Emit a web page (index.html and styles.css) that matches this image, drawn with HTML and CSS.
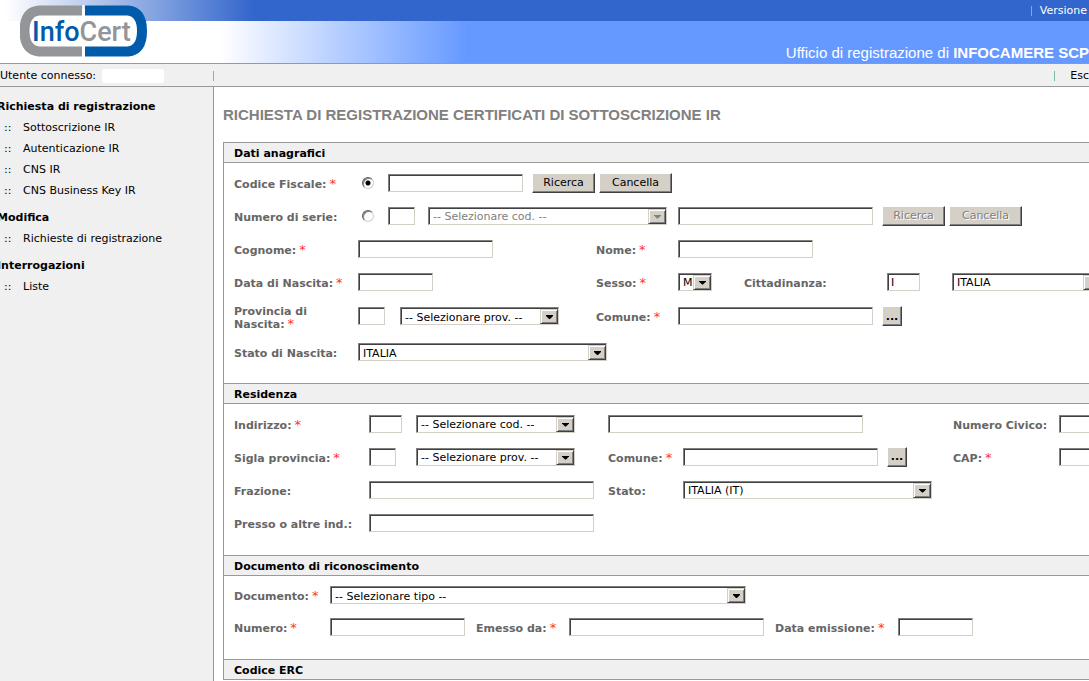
FILE: index.html
```html
<!DOCTYPE html>
<html lang="it">
<head>
<meta charset="utf-8">
<title>InfoCert - Ufficio di registrazione</title>
<link rel="stylesheet" href="styles.css">
</head>
<body>
<header class="header">
  <svg class="logo" width="128" height="52" viewBox="0 0 128 52" role="img" aria-label="InfoCert">
    <rect x="4" y="4" width="119" height="44" rx="18" fill="#fff"/>
    <path d="M62 5.500H19Q4.500 7 4.500 26T19 46.500H62" fill="none" stroke="#939598" stroke-width="10"/>
    <path d="M65 5.500H108Q122 7 122 26T108 46.500H65" fill="none" stroke="#005cab" stroke-width="10"/>
    <path d="M63.500 0V52" stroke="#fff" stroke-width="2"/>
    <text class="logo-text" x="12" y="36" fill="#005cab">Info<tspan fill="#939598">Cert</tspan></text>
  </svg>
  <div class="topbar"><span class="sep"></span><span>Versione</span></div>
  <div class="banner"><p class="office">Ufficio di registrazione di <b>INFOCAMERE SCP</b></p></div>
</header>
<div class="userbar">
  <div class="user">Utente connesso: <span class="username"></span></div>
  <span class="sep"></span>
  <div class="exit"><span class="sep"></span><a href="#">Esc</a></div>
</div>
<div class="body">
  <nav class="side">
    <section><h2>Richiesta di registrazione</h2>
      <ul><li><a href="#">Sottoscrizione IR</a></li><li><a href="#">Autenticazione IR</a></li><li><a href="#">CNS IR</a></li><li><a href="#">CNS Business Key IR</a></li></ul></section>
    <section><h2>Modifica</h2>
      <ul><li><a href="#">Richieste di registrazione</a></li></ul></section>
    <section><h2>Interrogazioni</h2>
      <ul><li><a href="#">Liste</a></li></ul></section>
  </nav>
  <main class="main">
    <h1>RICHIESTA DI REGISTRAZIONE CERTIFICATI DI SOTTOSCRIZIONE IR</h1>
    <form class="form">
      <h3>Dati anagrafici</h3>
      <div class="rows person">
        <div class="row">
          <label for="cf">Codice Fiscale:<i>*</i></label>
          <div class="cell wide">
            <input class="radio" type="radio" name="mode" aria-label="Codice Fiscale" checked>
            <input id="cf" class="text w135" type="text">
            <div class="buttons"><button type="button" class="btn search">Ricerca</button><button type="button" class="btn clear">Cancella</button></div>
          </div>
        </div>
        <div class="row">
          <label for="serie">Numero di serie:</label>
          <div class="cell span2">
            <input class="radio" type="radio" name="mode" aria-label="Numero di serie">
            <div class="code"><input id="serie" class="text w27" type="text"></div>
            <span class="select off w239"><select aria-label="Codice" disabled><option>-- Selezionare cod. --</option></select></span>
          </div>
          <div class="cell"><input class="text w195" type="text" aria-label="Numero"></div>
          <div class="buttons"><button type="button" class="btn search" disabled>Ricerca</button><button type="button" class="btn clear" disabled>Cancella</button></div>
        </div>
        <div class="row">
          <label for="cognome">Cognome:<i>*</i></label>
          <div class="cell"><input id="cognome" class="text w135" type="text"></div>
          <label for="nome">Nome:<i>*</i></label>
          <div class="cell"><input id="nome" class="text w135" type="text"></div>
        </div>
        <div class="row">
          <label for="nascita">Data di Nascita:<i>*</i></label>
          <div class="cell"><input id="nascita" class="text w75" type="text"></div>
          <label for="sesso">Sesso:<i>*</i></label>
          <div class="cell split"><span class="select w34"><select id="sesso"><option>M</option></select></span><label for="citt">Cittadinanza:</label></div>
          <div class="cell citizen"><input id="citt" class="text w33" type="text" value="I"><span class="select w150"><select aria-label="Stato di cittadinanza"><option>ITALIA</option></select></span></div>
        </div>
        <div class="row tall">
          <label for="prov">Provincia di Nascita:<i>*</i></label>
          <div class="cell"><div class="code"><input id="prov" class="text w27" type="text"></div><span class="select w159"><select aria-label="Provincia di nascita"><option>-- Selezionare prov. --</option></select></span></div>
          <label for="comune">Comune:<i>*</i></label>
          <div class="cell"><input id="comune" class="text w195" type="text"></div>
          <button type="button" class="btn more" aria-label="Cerca comune">...</button>
        </div>
        <div class="row tall">
          <label for="stato">Stato di Nascita:</label>
          <div class="cell wide"><span class="select w249"><select id="stato"><option>ITALIA</option></select></span></div>
        </div>
      </div>
      <h3>Residenza</h3>
      <div class="rows home">
        <div class="row">
          <label for="ind">Indirizzo:<i>*</i></label>
          <div class="cell"><div class="code"><input id="ind" class="text w33" type="text"></div><span class="select w159"><select aria-label="Codice indirizzo"><option>-- Selezionare cod. --</option></select></span></div>
          <div class="cell span2"><input class="text w255" type="text" aria-label="Nome della via"></div>
          <label for="civico">Numero Civico:</label>
          <div class="cell"><input id="civico" class="text w75" type="text"></div>
        </div>
        <div class="row">
          <label for="sigla">Sigla provincia:<i>*</i></label>
          <div class="cell"><div class="code"><input id="sigla" class="text w27" type="text"></div><span class="select w159"><select aria-label="Provincia"><option>-- Selezionare prov. --</option></select></span></div>
          <label for="rescom">Comune:<i>*</i></label>
          <div class="cell gap"><input id="rescom" class="text w195" type="text"><button type="button" class="btn more" aria-label="Cerca comune">...</button></div>
          <label for="cap">CAP:<i>*</i></label>
          <div class="cell"><input id="cap" class="text w75" type="text"></div>
        </div>
        <div class="row">
          <label for="fraz">Frazione:</label>
          <div class="cell"><input id="fraz" class="text w225" type="text"></div>
          <label for="resstato">Stato:</label>
          <div class="cell"><span class="select w249"><select id="resstato"><option>ITALIA (IT)</option></select></span></div>
        </div>
        <div class="row">
          <label for="presso">Presso o altre ind.:</label>
          <div class="cell"><input id="presso" class="text w225" type="text"></div>
        </div>
      </div>
      <h3>Documento di riconoscimento</h3>
      <div class="rows document">
        <div class="row">
          <label for="doc">Documento:<i>*</i></label>
          <div class="cell wide"><span class="select w416"><select id="doc"><option>-- Selezionare tipo --</option></select></span></div>
        </div>
        <div class="row">
          <label for="num">Numero:<i>*</i></label>
          <div class="cell"><input id="num" class="text w135" type="text"></div>
          <label for="emesso">Emesso da:<i>*</i></label>
          <div class="cell"><input id="emesso" class="text w195" type="text"></div>
          <label for="data">Data emissione:<i>*</i></label>
          <div class="cell"><input id="data" class="text w75" type="text"></div>
        </div>
      </div>
      <h3>Codice ERC</h3>
    </form>
  </main>
</div>
</body>
</html>
```

FILE: styles.css
```css
* { box-sizing: border-box; }
body {
  display: flex;
  flex-direction: column;
  min-height: 100vh;
  margin: 0;
  overflow: hidden;
  background: #fff;
  color: #000;
  font: 11px/13px Verdana, "DejaVu Sans", sans-serif;
}
h1, h2, h3, p, ul { margin: 0; padding: 0; }
a { color: inherit; text-decoration: none; }

/* Header */
.header { position: relative; border-bottom: 1px solid #999; }
.logo { position: absolute; left: 20px; top: 5px; }
.logo-text { font: 500 27px Roboto, sans-serif; }
.topbar {
  display: flex;
  justify-content: flex-end;
  align-items: center;
  gap: 8px;
  height: 21px;
  padding-right: 2px;
  background: linear-gradient(90deg, #fff 5px, #36c 253px);
  color: #fff;
}
.banner {
  display: flex;
  justify-content: flex-end;
  align-items: flex-end;
  height: 42px;
  background: linear-gradient(90deg, #fff 220px, #69f 467px);
}
.office { color: #fff; font: 15px/20px "Liberation Sans", Arial, sans-serif; white-space: nowrap; }
.sep { width: 1px; height: 10px; background: #6bb5d8; }

.userbar {
  display: flex;
  align-items: center;
  height: 23px;
  padding-top: 1px;
  border-bottom: 1px solid #999;
  background: #f0f0f0;
}
.userbar .sep { background: #7ab8ac; }
.user { display: flex; align-items: center; gap: 6px; width: 213px; }
.username { width: 62px; height: 14px; border-radius: 3px; background: #fff; }
.exit { display: flex; align-items: center; gap: 15px; margin-left: auto; }

/* Sidebar */
.body { display: flex; flex: 1; }
.side {
  flex: none;
  width: 214px;
  padding-top: 9px;
  border-right: 1px solid #999;
  background: #f0f0f0;
  line-height: 21px;
}
.side section { margin-bottom: 6px; }
.side h2 { margin-left: -3px; font-size: 11px; line-height: 21px; }
.side ul { list-style: none; }
.side li { display: flex; padding-left: 4px; }
.side li::before { content: "::"; width: 19px; }

/* Form */
.main { flex: 1; min-width: 0; padding: 18px 0 0 9px; }
h1 { margin-bottom: 17px; color: #808080; font: bold 15px/20px "Liberation Sans", Arial, sans-serif; white-space: nowrap; }
.form { border: solid #999; border-width: 1px 0 0 1px; }
h3 { height: 20px; padding-left: 10px; border-bottom: 1px solid #999; background: #f0f0f0; font-size: 11px; line-height: 21px; }
.rows + h3 { height: 21px; border-top: 1px solid #999; }
.rows { padding: 3px 0 13px 10px; }
.rows.home { padding-bottom: 16px; }
.rows.document { padding-bottom: 16px; }
.row { display: grid; align-items: center; height: 33px; }
.row.tall { height: 36px; }
.person .row { grid-template-columns: 124px 238px 82px 204px auto; justify-content: start; }
.home .row { grid-template-columns: 135px 239px 75px 270px 106px auto; justify-content: start; }
.document .row { grid-template-columns: 96px 146px 93px 206px 123px auto; justify-content: start; height: 32px; }
.cell { display: flex; align-items: center; }
.cell.span2 { grid-column: span 2; }
.cell.wide { grid-column: 2 / -1; }
.cell.gap { gap: 9px; }
.cell.split { gap: 32px; }
.citizen { gap: 32px; padding-left: 5px; }
.code { flex: none; width: 42px; }
.span2 > .code { width: 40px; }
.home .code { width: 47px; }
.buttons { display: flex; gap: 4px; }
.wide > .buttons { margin-left: 9px; }

label { padding-top: 3px; color: #666; font-weight: bold; }
label i { margin-left: 3px; color: #f33; font-size: 13px; font-style: normal; font-weight: normal; line-height: 1px; }

.text, select {
  display: block;
  height: 18px;
  margin: 0;
  padding: 1px 3px 0;
  border: 1px solid;
  border-color: #808080 #d4d0c8 #d4d0c8 #808080;
  border-radius: 0;
  outline: 0;
  box-shadow: inset 1px 1px #404040;
  background: #fff;
  color: #000;
  font: inherit;
  appearance: none;
}
.text { flex: none; }
select { width: 100%; padding: 2px 16px 0 4px; opacity: 1; }
.select { display: block; position: relative; flex: none; }
.select::before, .select::after { content: ""; position: absolute; pointer-events: none; }
.select::before {
  top: 2px;
  right: 1px;
  bottom: 1px;
  width: 16px;
  border: 1px solid;
  border-color: #d4d0c8 #404040 #404040 #d4d0c8;
  background: #d4d0c8;
  box-shadow: inset 1px 1px #fff, inset -1px -1px #808080;
}
.select::after {
  top: 8px;
  right: 6px;
  width: 7px;
  height: 4px;
  background: #000;
  clip-path: polygon(0 0, 7px 0, 7px 1px, 4px 4px, 3px 4px, 0 1px);
}
.off select { color: #808080; }
.off::after { background: #808080; }

.radio {
  flex: none;
  width: 12px;
  height: 12px;
  margin: 0 14px 0 4px;
  border: 1px solid;
  border-color: #606060 #d4d0c8 #d4d0c8 #606060;
  border-radius: 50%;
  background: #fff;
  box-shadow: inset 1px 1px #808080;
  appearance: none;
}
.radio:checked { background: radial-gradient(circle, #000 2px, #fff 3px); }

.btn {
  height: 20px;
  padding: 0;
  border: 1px solid;
  border-color: #fff #404040 #404040 #fff;
  border-radius: 0;
  background: #d4d0c8;
  box-shadow: inset -1px -1px #808080;
  color: #000;
  font: inherit;
}
.btn:disabled { color: #808080; text-shadow: 1px 1px #fff; }
.search { width: 63px; }
.clear { width: 73px; }
.more { width: 20px; font-weight: bold; }

.w27 { width: 27px; }
.w33 { width: 33px; }
.w34 { width: 34px; }
.w75 { width: 75px; }
.w135 { width: 135px; }
.w150 { width: 150px; }
.w159 { width: 159px; }
.w195 { width: 195px; }
.w225 { width: 225px; }
.w239 { width: 239px; }
.w249 { width: 249px; }
.w255 { width: 255px; }
.w416 { width: 416px; }
```
